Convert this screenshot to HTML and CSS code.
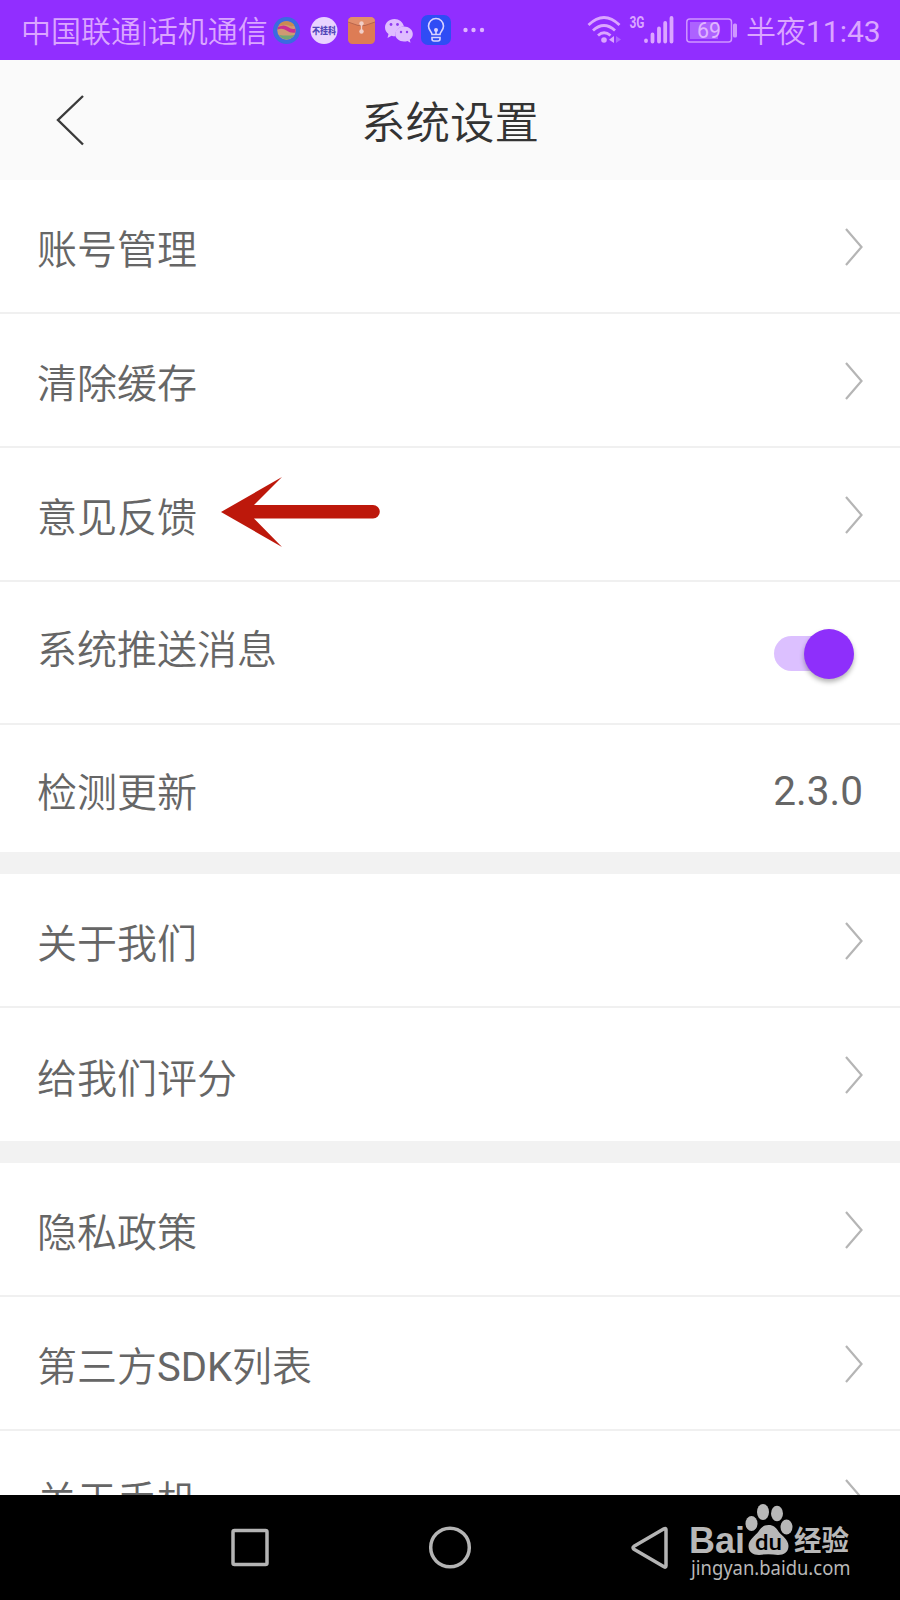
FILE: index.html
```html
<!DOCTYPE html>
<html lang="zh-CN">
<head>
<meta charset="utf-8">
<title>系统设置</title>
<link rel="stylesheet" href="styles.css">
</head>
<body>
<div class="screen">
  <div class="status">
    <span class="carrier">中国联通|话机通信</span>
    <svg class="notices" width="230" height="60" viewBox="270 0 230 60">
      <circle cx="286.500" cy="30.500" r="13.500" fill="#3a6be0"/>
      <circle cx="286.500" cy="30.500" r="9.200" fill="#cf9a72"/>
      <path d="M278.500 26q2-4.500 8-4.700 5 0 8 4.200l-3 1q-6-3-13-.5z" fill="#c98a52"/>
      <path d="M278 27q6-3 10 0t7.500 1.500v4q-5 1-9-2t-9-1z" fill="#c92f92"/>
      <path d="M279 35q8 1 15.500 0-2 3.500-7.500 4.500-5.500-.5-8-4.500z" fill="#6fa873"/>
      <circle cx="324" cy="30.500" r="13.500" fill="#e9d3ff"/>
      <text class="badge-text" x="312" y="34" textLength="24" lengthAdjust="spacingAndGlyphs">不挂科</text>
      <rect x="348" y="17" width="27" height="27" rx="4.500" fill="#dd7c55"/>
      <path d="M348 22q0-5 5-5h17q5 0 5 5l-10 3.500h-7z" fill="#e28f6c"/>
      <path d="M348 22l10 3.500h7l10-3.500" fill="none" stroke="#b9664d"/>
      <path d="M361.500 23.500v7.500" stroke="#f1cfc8" stroke-width="1.300"/>
      <circle cx="361.500" cy="23.500" r="2.200" fill="#f1cfc8"/>
      <circle cx="361.500" cy="31.500" r="2.200" fill="#f1cfc8"/>
      <path d="M394.500 19c-5.500 0-9.500 4-9.500 8.500 0 3 1.500 5 3.500 6.500l-1 4 4-2.300q2 .6 4 .5c-1-5 3-9.700 8.500-9.700-1-4.500-5-7.500-9.500-7.500z" fill="#dfbcff"/>
      <path d="M404 26.500c-5 0-8.800 3.300-8.800 7.500s4 7.500 8.800 7.500q2 0 3.500-.5l3 1.800-.7-3c2-1.500 3-3.500 3-5.800 0-4.200-4-7.500-8.800-7.500z" fill="#dfbcff"/>
      <g fill="#8f3cf0"><circle cx="391" cy="24.500" r="1.400"/><circle cx="397.500" cy="24.500" r="1.400"/><circle cx="401" cy="32" r="1.200"/><circle cx="407" cy="32" r="1.200"/></g>
      <rect x="421" y="15" width="30" height="30" rx="7" fill="#2f4cf5"/>
      <path d="M432 34.500c0-3-3.500-4-3.500-8.500a7.500 7.500 0 0 1 15 0c0 4.500-3.500 5.500-3.500 8.500zM432 37.500h8v1.500q0 2-2 2h-4q-2 0-2-2zM436 34v-4" fill="none" stroke="#d9d2ff" stroke-width="1.600"/>
      <circle cx="436" cy="30" r="2" fill="#d9d2ff"/>
      <g fill="#dfb3ff"><circle cx="465.500" cy="30" r="2.200"/><circle cx="473.500" cy="30" r="2.200"/><circle cx="482" cy="30" r="2.200"/></g>
    </svg>
    <svg class="signals" width="155" height="60" viewBox="585 0 155 60">
      <g fill="none" stroke="#dba6ff" stroke-width="2.800">
        <path d="M588.500 25q15.500-15 31 0"/>
        <path d="M593 30.500q11-10 22 0"/>
        <path d="M598 35.500q6-5.500 12.500 0"/>
      </g>
      <circle cx="604" cy="40" r="2.800" fill="#dba6ff"/>
      <path d="M614 36v7l-5-3.200z" fill="#dba6ff"/>
      <path d="M616 36v7l5-3.500z" fill="#ad63ff"/>
      <text class="net" x="629.500" y="28" textLength="15" lengthAdjust="spacingAndGlyphs">3G</text>
      <g stroke="#dba6ff" stroke-width="3.800" stroke-linecap="round">
        <path d="M646 40.500v.500M652.500 34.500v7M659 28.500v13M665.200 23v18.500M671.500 18v23.500"/>
      </g>
      <rect x="686.800" y="19" width="44.700" height="23" rx="3" fill="none" stroke="#cf96ff" stroke-width="1.500"/>
      <rect x="690" y="22" width="28" height="17" fill="#ad62ff"/>
      <rect x="733" y="23.500" width="4" height="14" rx="1.500" fill="#cf96ff"/>
      <text class="level" x="697" y="38" textLength="24" lengthAdjust="spacingAndGlyphs">69</text>
    </svg>
    <span class="clock">半夜<span class="digits">11:43</span></span>
  </div>

  <div class="header">
    <svg class="back" width="40" height="60" viewBox="0 0 40 60"><path d="M33 6L8 30 33 54.500" fill="none" stroke="#3a3a3a" stroke-width="2.400"/></svg>
    <h1 class="title">系统设置</h1>
  </div>

  <div class="list">
    <div class="row"><span class="label">账号管理</span><svg class="chevron" viewBox="0 0 20 40"><path d="M2 2l15.500 18L2 38"/></svg></div>
    <div class="row"><span class="label">清除缓存</span><svg class="chevron" viewBox="0 0 20 40"><path d="M2 2l15.500 18L2 38"/></svg></div>
    <div class="row">
      <span class="label">意见反馈</span>
      <svg class="arrow" width="162" height="72" viewBox="0 0 162 72"><path d="M1 36L62 1 34 29H153a6.800 6.800 0 0 1 0 13.600H34L62 71z" fill="#bd180b"/></svg>
      <svg class="chevron" viewBox="0 0 20 40"><path d="M2 2l15.500 18L2 38"/></svg>
    </div>
    <div class="row row-switch"><span class="label">系统推送消息</span><span class="switch"><span class="knob"></span></span></div>
    <div class="row row-version"><span class="label">检测更新</span><span class="version">2.3.0</span></div>
  </div>
  <div class="list">
    <div class="row"><span class="label">关于我们</span><svg class="chevron" viewBox="0 0 20 40"><path d="M2 2l15.500 18L2 38"/></svg></div>
    <div class="row row-last"><span class="label">给我们评分</span><svg class="chevron" viewBox="0 0 20 40"><path d="M2 2l15.500 18L2 38"/></svg></div>
  </div>
  <div class="list list-cut">
    <div class="row"><span class="label">隐私政策</span><svg class="chevron" viewBox="0 0 20 40"><path d="M2 2l15.500 18L2 38"/></svg></div>
    <div class="row"><span class="label">第三方<span class="digits">SDK</span>列表</span><svg class="chevron" viewBox="0 0 20 40"><path d="M2 2l15.500 18L2 38"/></svg></div>
    <div class="row"><span class="label">关于手机</span><svg class="chevron" viewBox="0 0 20 40"><path d="M2 2l15.500 18L2 38"/></svg></div>
  </div>

  <div class="nav">
    <svg width="900" height="105" viewBox="0 1495 900 105">
      <g fill="none" stroke="#b4b4b4" stroke-width="3.500">
        <rect x="233" y="1530.500" width="34" height="34" rx="1.500"/>
        <circle cx="450" cy="1547.500" r="19.300"/>
        <path d="M664 1528.800q2-1 2 1v36q0 2-2 1l-30-17.500q-2-1.500 0-3z" stroke-linejoin="round"/>
      </g>
      <g fill="#b8b8b8">
        <text class="brand" x="689" y="1553" textLength="56" lengthAdjust="spacingAndGlyphs">Bai</text>
        <ellipse cx="751.500" cy="1523.500" rx="6" ry="7.500"/>
        <ellipse cx="763" cy="1512" rx="6" ry="8"/>
        <ellipse cx="777" cy="1513.500" rx="6" ry="7.700"/>
        <ellipse cx="786.500" cy="1527" rx="6" ry="7.500"/>
        <path d="M768.500 1525c5 0 7.500 2.500 10 6.500 3.500 4.500 10 8 10 14.500 0 6-4.500 9-10.500 9q-9.500-1.500-19 0c-6 0-10.500-3-10.500-9s6.500-10 10-14.500c2.500-4 5-6.500 10-6.500z"/>
        <text class="brand-cn" x="794" y="1551" textLength="55" lengthAdjust="spacingAndGlyphs">经验</text>
        <text class="site" x="691" y="1575" textLength="159.500" lengthAdjust="spacingAndGlyphs">jingyan.baidu.com</text>
      </g>
      <text class="du" x="755" y="1549.500" textLength="27" lengthAdjust="spacingAndGlyphs">du</text>
    </svg>
  </div>
</div>
</body>
</html>
```
FILE: styles.css
```css
body {
  margin: 0;
  background: #fff;
  font-family: Roboto, "Noto Sans CJK SC", sans-serif;
}

.screen {
  width: 900px;
  height: 1600px;
  display: flex;
  flex-direction: column;
  overflow: hidden;
  background: #f2f2f2;
}

.status {
  height: 60px;
  flex: none;
  display: flex;
  align-items: center;
  background: #912eff;
  color: #dba6ff;
  white-space: nowrap;
}

.carrier {
  width: 249px;
  padding: 4px 0 0 21px;
  font-size: 30px;
  font-weight: 350;
  line-height: 56px;
}

.notices,
.signals {
  display: block;
  flex: none;
}

.signals {
  margin-left: 85px;
}

.clock {
  margin-left: 6px;
  padding-top: 4px;
  font-size: 30px;
  font-weight: 350;
  line-height: 56px;
}

.digits {
  font-weight: 400;
}

.badge-text {
  font-size: 9px;
  font-weight: 900;
  fill: #5146b8;
}

.net {
  font-size: 16px;
  font-weight: 700;
  fill: #dba6ff;
}

.level {
  font-size: 22px;
  fill: #e0b5ff;
}

.header {
  height: 120px;
  flex: none;
  display: grid;
  grid-template-columns: 50px 40px 1fr 90px;
  align-items: center;
  background: #fafafa;
}

.back {
  grid-column: 2;
}

.title {
  grid-column: 3;
  margin: 0;
  padding-top: 8px;
  font-size: 44.500px;
  font-weight: 350;
  line-height: 60px;
  text-align: center;
  color: #333;
}

.list {
  flex: none;
  margin-bottom: 22px;
  background: #fff;
}

.list-cut {
  height: 332px;
  margin-bottom: 0;
  overflow: hidden;
}

.row {
  box-sizing: border-box;
  height: 134px;
  display: flex;
  align-items: center;
  padding: 0 36px 0 37px;
  border-bottom: 2px solid #f0f0f0;
  color: #666;
}

.label {
  padding-top: 10px;
  font-size: 40px;
  font-weight: 350;
  line-height: 60px;
}

.chevron {
  width: 20px;
  height: 40px;
  margin-left: auto;
  padding-top: 1px;
  fill: none;
  stroke: #b5b5b5;
  stroke-width: 2.200;
}

.arrow {
  margin: 0 0 4px 23px;
}

.row-switch {
  height: 143px;
  padding-right: 46px;
}

.row-switch .label {
  padding: 0 0 4px;
}

.switch {
  width: 80px;
  height: 35px;
  margin: 2px 0 0 auto;
  display: flex;
  align-items: center;
  justify-content: flex-end;
  background: linear-gradient(to right, #dcc0ff 60px, transparent 60px);
  border-radius: 17.500px;
}

.knob {
  width: 50px;
  height: 50px;
  flex: none;
  border-radius: 50%;
  background: #8e2ffb;
  box-shadow: 0 3px 5px rgba(0, 0, 0, 0.3);
}

.row-version {
  height: 127px;
  border-bottom: 0;
}

.version {
  margin-right: 1px;
  margin-left: auto;
  padding-top: 5px;
  font-size: 40.500px;
  line-height: 60px;
}

.row-last {
  height: 133px;
  border-bottom: 0;
}

.nav {
  height: 105px;
  flex: none;
  background: #000;
}

.nav svg {
  display: block;
}

.brand {
  font-family: "Liberation Sans", sans-serif;
  font-size: 36px;
  font-weight: 700;
}

.brand-cn {
  font-size: 28px;
  font-weight: 700;
}

.site {
  font-family: "Noto Sans", "Open Sans", sans-serif;
  font-size: 20px;
}

.du {
  font-size: 22px;
  font-weight: 500;
  fill: #000;
}
```
